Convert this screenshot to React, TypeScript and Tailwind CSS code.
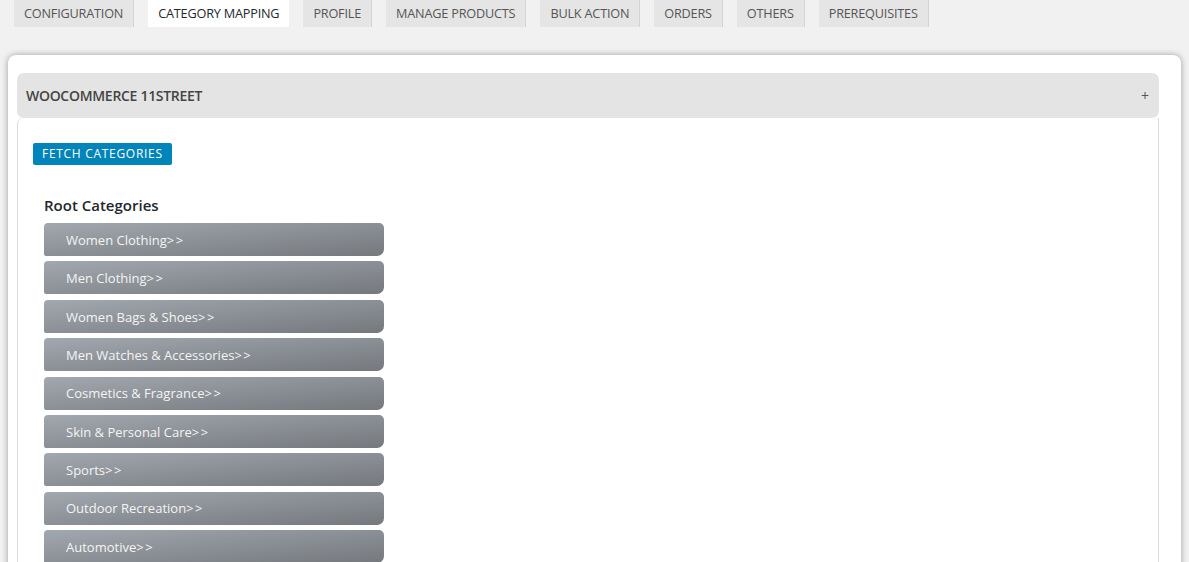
import React from 'react';

const tabs = [
  'CONFIGURATION',
  'CATEGORY MAPPING',
  'PROFILE',
  'MANAGE PRODUCTS',
  'BULK ACTION',
  'ORDERS',
  'OTHERS',
  'PREREQUISITES',
];

const rootCategories = [
  'Women Clothing',
  'Men Clothing',
  'Women Bags & Shoes',
  'Men Watches & Accessories',
  'Cosmetics & Fragrance',
  'Skin & Personal Care',
  'Sports',
  'Outdoor Recreation',
  'Automotive',
];

export default function App() {
  return (
    <div
      className="h-[562px] overflow-hidden bg-[#f1f1f1] text-[#444]"
      style={{ fontFamily: '"Open Sans", "Noto Sans", sans-serif' }}
    >
      {/* Tab strip */}
      <div className="flex gap-[14px] pl-[14px]">
        {tabs.map((tab) => (
          <div
            key={tab}
            className={`h-[27px] px-[10px] text-[12.7px] leading-[27px] tracking-[-0.2px] ${
              tab === 'CATEGORY MAPPING'
                ? 'bg-white text-[#23282d]'
                : 'border-r border-[#d4d4d4] bg-[#e5e5e5] text-[#555]'
            }`}
          >
            {tab}
          </div>
        ))}
      </div>

      {/* Main card */}
      <div className="mx-[8px] mt-[28px] h-[600px] rounded-[8px] bg-white pl-[9px] pr-[22px] pt-[18px] shadow-[0_0_6px_rgba(0,0,0,0.35)]">
        <div className="flex h-[45px] items-center justify-between rounded-[7px] bg-[#e4e4e4] pl-[9px] pr-[10px]">
          <span className="text-[14px] font-semibold tracking-[-0.3px] text-[#444]">WOOCOMMERCE 11STREET</span>
          <span className="text-[14px] text-[#555]">+</span>
        </div>

        <div className="h-[500px] rounded-tl-[6px] border border-t-0 border-[#dcdcdc] pl-[15px] pt-[25px]">
          <button className="block h-[22px] rounded-[2px] bg-[#0085ba] px-[9px] text-[12px] leading-[22px] tracking-[0.7px] text-white">
            FETCH CATEGORIES
          </button>

          <div className="mt-[31px] pl-[11px]">
            <h3 className="text-[15px] font-semibold leading-[18px] text-[#23282d]">Root Categories</h3>
            <div className="mt-[9px] flex flex-col gap-[5.4px]">
              {rootCategories.map((name) => (
                <div
                  key={name}
                  className="flex h-[33px] w-[340px] items-center rounded-tl-[4px] rounded-tr-[5px] rounded-br-[7px] rounded-bl-[2px] bg-gradient-to-br from-[#a2a8af] to-[#75797e] pl-[22px] pt-[2px] text-[13px] text-[#f4f4f4]"
                >
                  {name}
                  <span className="tracking-[1.5px]">&gt;&gt;</span>
                </div>
              ))}
            </div>
          </div>
        </div>
      </div>
    </div>
  );
}
